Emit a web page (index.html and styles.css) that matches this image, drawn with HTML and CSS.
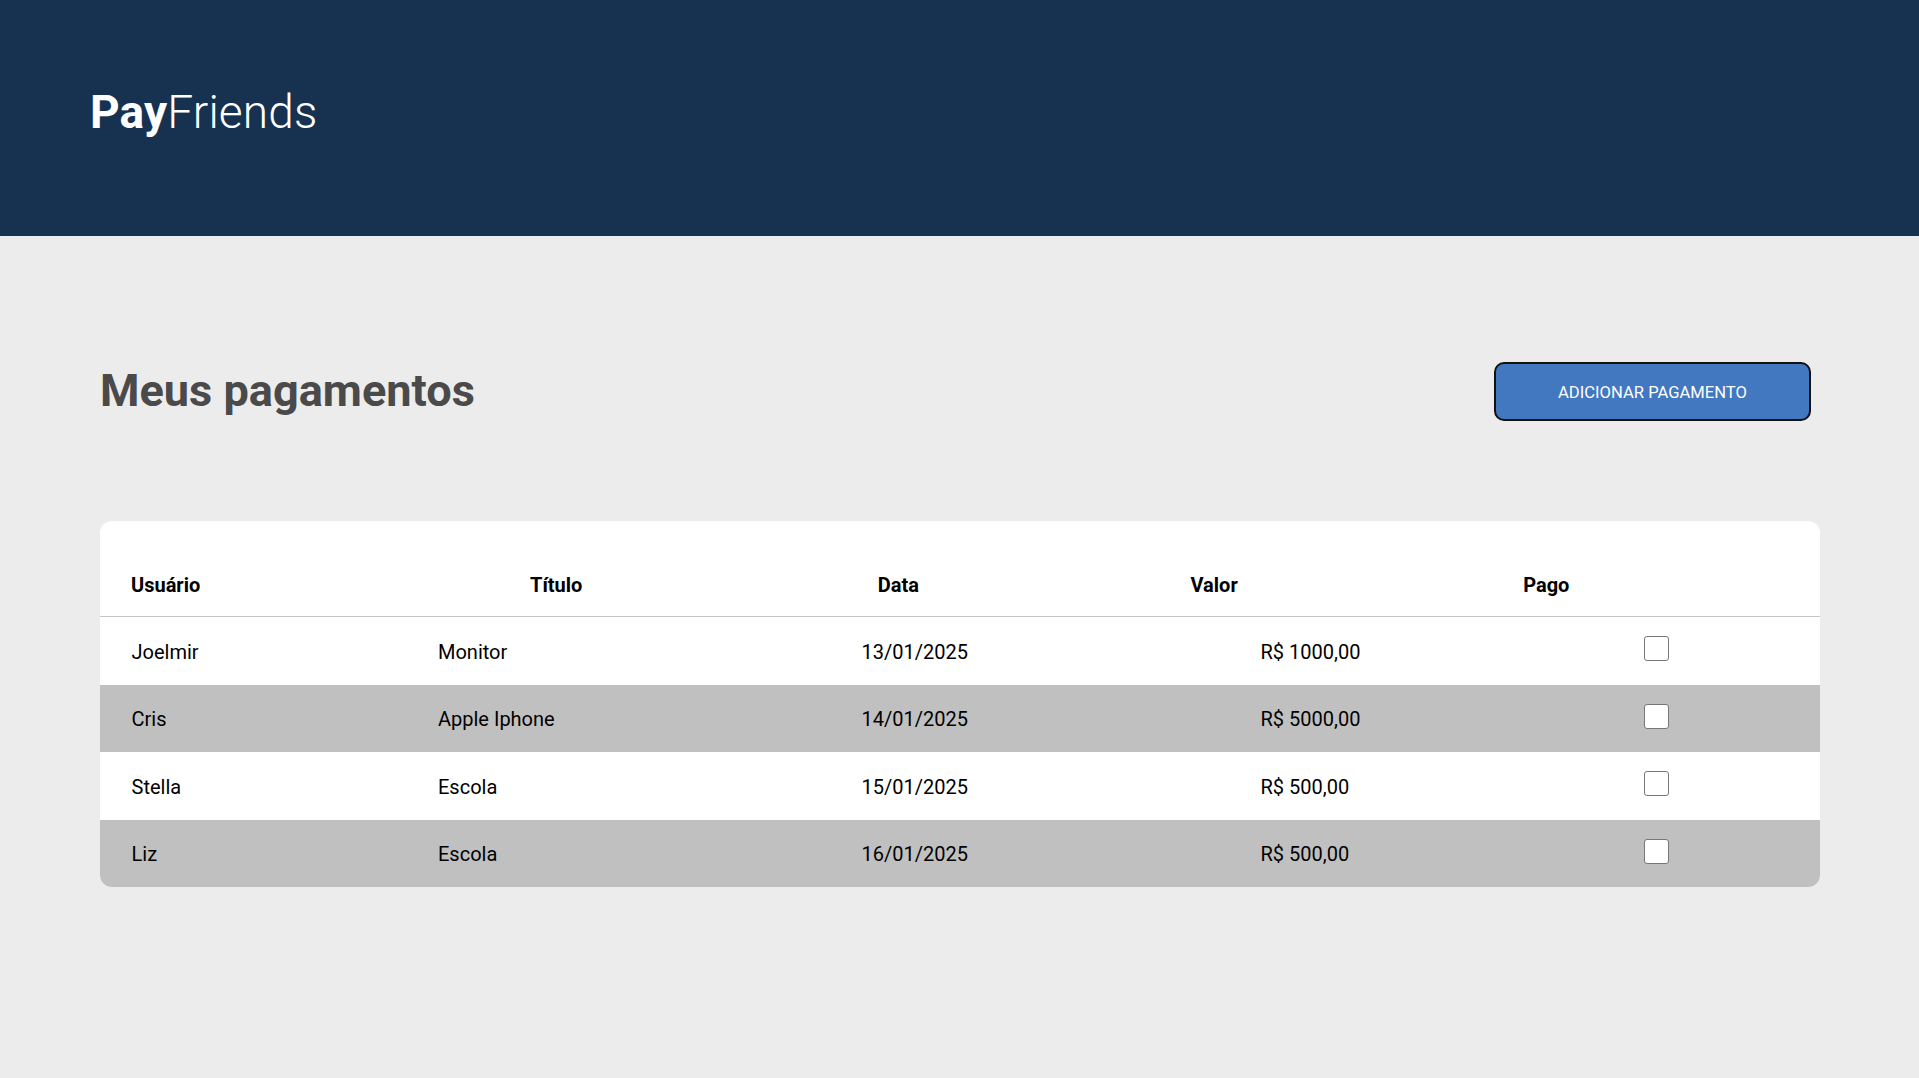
FILE: index.html
```html
<!DOCTYPE html>
<html lang="pt-BR">
<head>
<meta charset="utf-8">
<title>PayFriends</title>
<link rel="stylesheet" href="styles.css">
</head>
<body>
  <header class="topbar">
    <div class="logo"><span class="logo-bold">Pay</span><span class="logo-light">Friends</span></div>
  </header>
  <main class="content">
    <div class="title-row">
      <h1 class="page-title">Meus pagamentos</h1>
      <button class="add-btn" type="button">ADICIONAR PAGAMENTO</button>
    </div>
    <section class="card">
      <div class="thead">
        <div class="th">Usuário</div>
        <div class="th">Título</div>
        <div class="th">Data</div>
        <div class="th">Valor</div>
        <div class="th">Pago</div>
      </div>
      <div class="row">
        <div class="td">Joelmir</div>
        <div class="td">Monitor</div>
        <div class="td">13/01/2025</div>
        <div class="td">R$ 1000,00</div>
        <div class="td"><input class="check" type="checkbox"></div>
      </div>
      <div class="row row-alt">
        <div class="td">Cris</div>
        <div class="td">Apple Iphone</div>
        <div class="td">14/01/2025</div>
        <div class="td">R$ 5000,00</div>
        <div class="td"><input class="check" type="checkbox"></div>
      </div>
      <div class="row">
        <div class="td">Stella</div>
        <div class="td">Escola</div>
        <div class="td">15/01/2025</div>
        <div class="td">R$ 500,00</div>
        <div class="td"><input class="check" type="checkbox"></div>
      </div>
      <div class="row row-alt">
        <div class="td">Liz</div>
        <div class="td">Escola</div>
        <div class="td">16/01/2025</div>
        <div class="td">R$ 500,00</div>
        <div class="td"><input class="check" type="checkbox"></div>
      </div>
    </section>
  </main>
</body>
</html>
```

FILE: styles.css
```css
* {
  box-sizing: border-box;
}

html, body {
  margin: 0;
  padding: 0;
}

body {
  background: #ececec;
  font-family: Roboto, "Liberation Sans", Arial, sans-serif;
  color: #000;
  min-height: 100vh;
}

.topbar {
  height: 236px;
  background: #163250;
  padding: 84.5px 0 0 90px;
}

.logo {
  font-size: 46px;
  line-height: 54px;
  color: #fff;
  letter-spacing: 0.15px;
}

.logo-bold {
  font-weight: 700;
}

.logo-light {
  font-weight: 300;
}

.content {
  padding: 126px 99px 0 100px;
}

.title-row {
  display: flex;
  align-items: center;
  justify-content: space-between;
  height: 59px;
}

.page-title {
  margin: 0 0 2px 0;
  font-size: 45.1px;
  font-weight: 700;
  color: #4a4a4a;
  line-height: 52px;
}

.add-btn {
  width: 317px;
  height: 59px;
  margin-right: 9px;
  background: #4178bf;
  color: #fff;
  border: 2px solid #111;
  border-radius: 10px;
  font-family: Roboto, "Liberation Sans", Arial, sans-serif;
  font-size: 16.6px;
  font-weight: 400;
  padding: 1px 0 0 0;
}

.card {
  margin-top: 100px;
  background: #fff;
  border-radius: 12px;
  overflow: hidden;
}

.thead {
  display: grid;
  grid-template-columns: 399px 347.7px 312.8px 332.7px 1fr;
  padding: 53px 0 19.5px 31px;
  border-bottom: 1px solid #c4c4c4;
  font-size: 20px;
  line-height: 22.5px;
  font-weight: 700;
}

.row {
  display: grid;
  grid-template-columns: 306.5px 423.5px 399px 384px 1fr;
  align-items: center;
  height: 67.5px;
  padding-left: 31.5px;
  font-size: 20px;
  line-height: 22.5px;
  background: #fff;
}

.row-alt {
  background: #c0c0c0;
}

.td {
  padding-top: 2px;
}

.check {
  appearance: none;
  -webkit-appearance: none;
  display: block;
  width: 25px;
  height: 25px;
  margin: 0 0 6px -0.5px;
  background: #fff;
  border: 1px solid #777;
  border-radius: 3px;
}
```
